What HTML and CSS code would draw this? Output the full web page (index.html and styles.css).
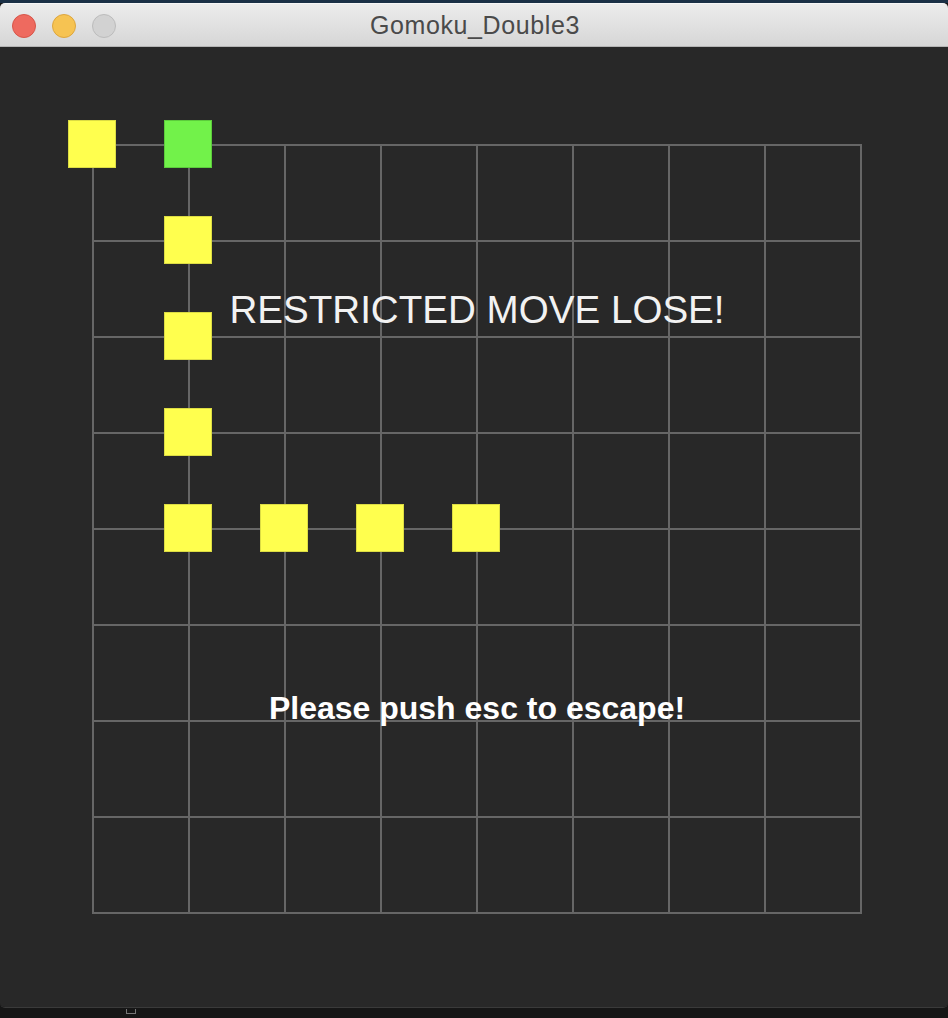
FILE: index.html
```html
<!DOCTYPE html>
<html>
<head>
<meta charset="utf-8">
<title>Gomoku_Double3</title>
<link rel="stylesheet" href="styles.css">
</head>
<body>
<div class="desktop-top"></div>
<div class="window">
  <div class="titlebar">
    <div class="lights">
      <span class="light red"></span>
      <span class="light yellow"></span>
      <span class="light gray"></span>
    </div>
    <div class="title">Gomoku_Double3</div>
  </div>
  <div class="content">
    <svg class="board" width="948" height="960" viewBox="0 47 948 960">
      <g class="grid" stroke="#666666" stroke-width="2" fill="none">
        <line x1="93" y1="145" x2="93" y2="913"/>
        <line x1="189" y1="145" x2="189" y2="913"/>
        <line x1="285" y1="145" x2="285" y2="913"/>
        <line x1="381" y1="145" x2="381" y2="913"/>
        <line x1="477" y1="145" x2="477" y2="913"/>
        <line x1="573" y1="145" x2="573" y2="913"/>
        <line x1="669" y1="145" x2="669" y2="913"/>
        <line x1="765" y1="145" x2="765" y2="913"/>
        <line x1="861" y1="145" x2="861" y2="913"/>
        <line x1="92" y1="145" x2="862" y2="145"/>
        <line x1="92" y1="241" x2="862" y2="241"/>
        <line x1="92" y1="337" x2="862" y2="337"/>
        <line x1="92" y1="433" x2="862" y2="433"/>
        <line x1="92" y1="529" x2="862" y2="529"/>
        <line x1="92" y1="625" x2="862" y2="625"/>
        <line x1="92" y1="721" x2="862" y2="721"/>
        <line x1="92" y1="817" x2="862" y2="817"/>
        <line x1="92" y1="913" x2="862" y2="913"/>
      </g>
      <g class="stones">
        <rect class="stone-y" x="68.5" y="120.5" width="47" height="47"/>
        <rect class="stone-g" x="164.5" y="120.5" width="47" height="47"/>
        <rect class="stone-y" x="164.5" y="216.5" width="47" height="47"/>
        <rect class="stone-y" x="164.5" y="312.5" width="47" height="47"/>
        <rect class="stone-y" x="164.5" y="408.5" width="47" height="47"/>
        <rect class="stone-y" x="164.5" y="504.5" width="47" height="47"/>
        <rect class="stone-y" x="260.5" y="504.5" width="47" height="47"/>
        <rect class="stone-y" x="356.5" y="504.5" width="47" height="47"/>
        <rect class="stone-y" x="452.5" y="504.5" width="47" height="47"/>
      </g>
    </svg>
    <div class="msg msg-lose">RESTRICTED MOVE LOSE!</div>
    <div class="msg msg-esc">Please push esc to escape!</div>
  </div>
</div>
<div class="below">
  <span class="below-box"></span>
</div>
</body>
</html>
```

FILE: styles.css
```css
html, body {
  margin: 0;
  padding: 0;
}
body {
  width: 948px;
  height: 1018px;
  overflow: hidden;
  background: #161616;
  font-family: "Liberation Sans", Arial, sans-serif;
}
.desktop-top {
  height: 3px;
  background: #1b3046;
}
.window {
  display: flex;
  flex-direction: column;
  height: 1004px;
  border-radius: 0 0 5px 5px;
  overflow: hidden;
  border-bottom: 1px solid #3a3a3a;
}
.titlebar {
  position: relative;
  height: 42px;
  flex: none;
  background: linear-gradient(#ececec, #d6d6d6);
  border-top: 1px solid #f6f6f6;
  border-bottom: 1px solid #b4b4b4;
  border-radius: 5px 5px 0 0;
  display: flex;
  align-items: center;
  justify-content: center;
}
.lights {
  position: absolute;
  left: 12px;
  top: 10px;
  display: flex;
  gap: 16px;
}
.light {
  width: 24px;
  height: 24px;
  border-radius: 50%;
  box-sizing: border-box;
}
.light.red {
  background: #ee6a5f;
  border: 1px solid #d75549;
}
.light.yellow {
  background: #f6c352;
  border: 1px solid #dda63e;
}
.light.gray {
  background: #d2d2d2;
  border: 1px solid #bcbcbc;
}
.title {
  font-family: "Liberation Sans", Arial, sans-serif;
  font-size: 25px;
  color: #4a4a4a;
  letter-spacing: 0.6px;
  margin-left: 2px;
}
.content {
  position: relative;
  flex: 1;
  background: #282828;
}
.board {
  display: block;
}
.stone-y {
  fill: #ffff4e;
  stroke: #dcdc44;
  stroke-width: 1;
}
.stone-g {
  fill: #72f24a;
  stroke: #5ccc3c;
  stroke-width: 1;
}
.msg {
  position: absolute;
  left: 93px;
  width: 768px;
  text-align: center;
  white-space: nowrap;
  line-height: 1;
}
.msg-lose {
  top: 244px;
  font-size: 38.6px;
  color: #f2f2f2;
}
.msg-esc {
  top: 645px;
  font-size: 32px;
  font-weight: bold;
  color: #ffffff;
}
.below {
  position: relative;
  height: 10px;
}
.below-box {
  position: absolute;
  left: 126px;
  top: 1px;
  width: 8px;
  height: 4px;
  border: 1px solid #777;
  border-top: none;
}
```
